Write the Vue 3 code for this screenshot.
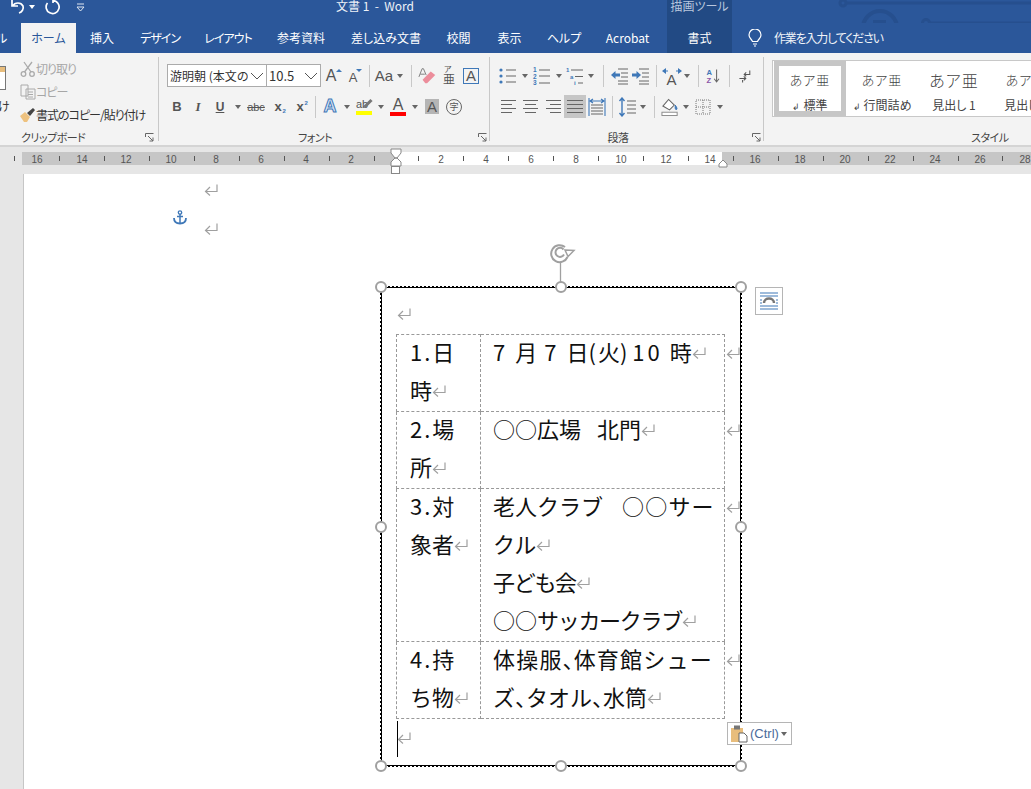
<!--
  Word の編集画面（テキストボックス内の表を選択中）
-->
<template>
  <div class="word">
    <!-- 共通アイコン -->
    <svg class="defs" width="0" height="0">
      <symbol id="ret" viewBox="0 0 14 12"><path d="M13 .5V7.500H1.500M6 3L1.500 7.500l4.500 4" fill="none" stroke="#a0a0a0" stroke-width="1.200" /></symbol>
      <symbol id="bullets" viewBox="0 0 20 20"><g fill="#3f78b8"><circle cx="3" cy="4" r="1.6" /><circle cx="3" cy="10" r="1.6" /><circle cx="3" cy="16" r="1.6" /></g><path d="M8 4h10M8 10h10M8 16h10" stroke="#666" stroke-width="1.2" /></symbol>
      <symbol id="numbers" viewBox="0 0 20 20"><path d="M7 4h11M7 10h11M7 17h11" stroke="#666" stroke-width="1.2" /></symbol>
      <symbol id="multi" viewBox="0 0 20 20"><path d="M6 4h12M10 10.500h8M13 17h5" stroke="#666" stroke-width="1.2" /></symbol>
      <symbol id="outdent" viewBox="0 0 20 20"><path d="M8 3h10M11 7h7M11 11h7M8 15h10M8 18h10" stroke="#666" stroke-width="1" /><path d="M1 9l4.500-4v2.500H10v3H5.500V13z" fill="#3f78b8" /></symbol>
      <symbol id="indent" viewBox="0 0 20 20"><path d="M8 3h10M11 7h7M11 11h7M8 15h10M8 18h10" stroke="#666" stroke-width="1" /><path d="M10 9L5.500 5v2.500H1v3h4.500V13z" fill="#3f78b8" /></symbol>
      <symbol id="direction" viewBox="0 0 20 20"><path d="M0 5l4-3v6zM20 5l-4-3v6z" fill="#3f78b8" /><path d="M4 5h2M14 5h2" stroke="#3f78b8" /></symbol>
      <symbol id="sort" viewBox="0 0 20 20"><path d="M14.500 2v15M11.500 13.500l3 4 3-4" fill="none" stroke="#666" stroke-width="1.300" /></symbol>
      <symbol id="compat" viewBox="0 0 20 20"><path d="M16 3v5H9M11.500 5.500L9 8l2.500 2.500" fill="none" stroke="#555" stroke-width="1.300" /><path d="M3 13h8M8.500 10.500L11 13l-2.500 2.500M7 15v3" fill="none" stroke="#555" stroke-width="1.300" /></symbol>
      <symbol id="left" viewBox="0 0 20 20"><path d="M2 3.500h15M2 7.500h11M2 11.500h15M2 15.500h11" stroke="#666" stroke-width="1.200" /></symbol>
      <symbol id="center" viewBox="0 0 20 20"><path d="M2 3.500h15M4 7.500h11M2 11.500h15M4 15.500h11" stroke="#666" stroke-width="1.200" /></symbol>
      <symbol id="right" viewBox="0 0 20 20"><path d="M3 3.500h15M7 7.500h11M3 11.500h15M7 15.500h11" stroke="#666" stroke-width="1.200" /></symbol>
      <symbol id="justify" viewBox="0 0 20 20"><path d="M2 3.500h16M2 7.500h16M2 11.500h16M2 15.500h16" stroke="#666" stroke-width="1.200" /></symbol>
      <symbol id="distribute" viewBox="0 0 20 20"><path d="M4 8h12M4 11h12M4 14h12M4 17h12" stroke="#666" stroke-width="1.100" /><path d="M2 1v18M18 1v18" stroke="#3f78b8" stroke-width="1.100" /><path d="M3 4h14M6 2L3 4l3 2M14 2l3 2-3 2" fill="none" stroke="#3f78b8" stroke-width="1.200" /></symbol>
      <symbol id="spacing" viewBox="0 0 20 20"><path d="M9 4h9M9 8h9M9 12h9M9 16h9" stroke="#666" stroke-width="1.200" /><path d="M4 1v18M1.500 4L4 1l2.500 3M1.500 16L4 19l2.500-3" fill="none" stroke="#3f78b8" stroke-width="1.400" /></symbol>
      <symbol id="shading" viewBox="0 0 20 20"><path d="M2 9l6-7 6 6-5 5z" fill="#fff" stroke="#666" stroke-width="1.100" /><path d="M15 8c2 3 2.500 4 1 5-1.500-1-1-2-1-5z" fill="#3f78b8" stroke="#3f78b8" /><rect x="1" y="15.500" width="16" height="3.500" fill="#fff" stroke="#888" /></symbol>
      <symbol id="borders" viewBox="0 0 20 20"><path d="M3 3h14v14H3zM10 3v14M3 10h14" fill="none" stroke="#777" stroke-width="1" stroke-dasharray="1 1" /></symbol>
      <symbol id="eraser" viewBox="0 0 22 20"><path d="M5 14l9-9 5 4-9 9H8z" fill="#ec8d9b" /><path d="M1 11L4.500 2H6l3 7M2.500 8h5" fill="none" stroke="#777" /></symbol>
      <symbol id="scissors" viewBox="0 0 16 16"><circle cx="3.500" cy="13" r="2.300" fill="none" stroke="#aaa" stroke-width="1.300" /><circle cx="12" cy="13" r="2.300" fill="none" stroke="#aaa" stroke-width="1.300" /><path d="M4.500 11L12 1M11 11L4 1" stroke="#aaa" stroke-width="1.300" /></symbol>
      <symbol id="copy" viewBox="0 0 16 16"><path d="M1 1h7v11H1zM6 5h9v10H6z" fill="#f3f3f3" stroke="#aaa" /><path d="M8 8h5M8 10.500h5M8 13h5" stroke="#aaa" /></symbol>
      <symbol id="brush" viewBox="0 0 16 16"><path d="M0 9l5-4 5 5-3 5H4z" fill="#eec27f" /><path d="M7 6l6-5 2 2-5 6z" fill="#444" /></symbol>
      <symbol id="launcher" viewBox="0 0 9 9"><path d="M.5 4V.5H8.500M3 3l5 5M8 4.500V8H4.500" fill="none" stroke="#666" /></symbol>
    </svg>

    <!-- タイトルバー -->
    <div class="titlebar">
      <svg class="circuit" width="200" height="53" viewBox="0 0 200 53">
        <g fill="none" stroke="#264f8e" stroke-width="3">
          <circle cx="12" cy="3" r="3" /><path d="M16 3H200" />
          <circle cx="95" cy="23" r="3.500" /><path d="M99 23H200" />
          <circle cx="49" cy="28" r="17" stroke-width="4" />
          <path d="M44 33V22H55M43 22L57 36" stroke-width="4" />
          <path d="M20 50H140L168 33H200" />
        </g>
      </svg>
      <div class="qat">
        <svg class="qat-undo" width="18" height="16" viewBox="0 0 18 16"><path d="M3 1v6h6M3.500 7C6 3 12 3 14 7c1 3-1 6-4 7" fill="none" stroke="#fff" stroke-width="1.700" /></svg>
        <i class="caret white"></i>
        <svg class="qat-redo" width="16" height="16" viewBox="0 0 16 16"><path d="M9 1.500A6.500 6.500 0 1 1 3.500 4M9 0v4" fill="none" stroke="#fff" stroke-width="1.700" /></svg>
        <svg class="qat-more" width="9" height="9" viewBox="0 0 9 9"><path d="M1 1h7" stroke="#dfe6f0" /><path d="M1 4h7L4.500 8z" fill="none" stroke="#dfe6f0" /></svg>
      </div>
      <div class="doc-title">文書 1 &nbsp;-&nbsp; Word</div>
      <div class="ctx-title">描画ツール</div>
    </div>

    <!-- タブ -->
    <div class="tabs">
      <div class="tab file-tab"><span>ル</span></div>
      <div class="tab home">ホーム</div>
      <div v-for="t in tabs" :key="t.label" class="tab" :class="{ tight: t.tight }" :style="{ width: t.w + 'px' }">{{ t.label }}</div>
      <div class="tab ctx">書式</div>
      <svg class="bulb" width="14" height="18" viewBox="0 0 14 18"><path d="M4.500 12.500C3.500 10 1 9 1 6a6 6 0 0 1 12 0c0 3-2.500 4-3.500 6.500zM5 15h4M6 17h2" fill="none" stroke="#fff" stroke-width="1.200" /></svg>
      <div class="tell">作業を入力してください</div>
    </div>

    <!-- リボン -->
    <div class="ribbon">
      <section class="group g-clip">
        <div class="group-body clip-body">
          <div class="paste">
            <div class="paste-icon"></div>
            <div class="paste-label">け</div>
          </div>
          <div class="clip-list">
            <div class="clip-item off"><svg width="16" height="16"><use href="#scissors" /></svg>切り取り</div>
            <div class="clip-item off"><svg width="16" height="16"><use href="#copy" /></svg>コピー</div>
            <div class="clip-item"><svg width="16" height="16"><use href="#brush" /></svg>書式のコピー/貼り付け</div>
          </div>
        </div>
        <div class="group-label">クリップボード<svg class="launcher" width="9" height="9"><use href="#launcher" /></svg></div>
      </section>

      <section class="group g-font">
        <div class="group-body">
          <div class="row">
            <div class="combo c-name"><span>游明朝 (本文のフォント)</span><svg width="14" height="8" viewBox="0 0 14 8"><path d="M1 1l6 6 6-6" fill="none" stroke="#555" /></svg></div>
            <div class="combo c-size"><span>10.5</span><svg width="14" height="8" viewBox="0 0 14 8"><path d="M1 1l6 6 6-6" fill="none" stroke="#555" /></svg></div>
            <template v-for="(t, i) in fontRow1" :key="i">
              <tool-item :t="t" />
            </template>
          </div>
          <div class="row">
            <template v-for="(t, i) in fontRow2" :key="i">
              <tool-item :t="t" />
            </template>
          </div>
        </div>
        <div class="group-label">フォント<svg class="launcher" width="9" height="9"><use href="#launcher" /></svg></div>
      </section>

      <section class="group g-para">
        <div class="group-body">
          <div class="row">
            <template v-for="(t, i) in paraRow1" :key="i">
              <tool-item :t="t" />
            </template>
          </div>
          <div class="row row-b">
            <template v-for="(t, i) in paraRow2" :key="i">
              <tool-item :t="t" />
            </template>
          </div>
        </div>
        <div class="group-label">段落<svg class="launcher" width="9" height="9"><use href="#launcher" /></svg></div>
      </section>

      <section class="group g-style">
        <div class="gallery">
          <div v-for="(s, i) in styles" :key="s.label" class="style-item" :class="{ selected: i === 0, big: s.big }">
            <div class="style-sample">あア亜</div>
            <div class="style-label"><span v-if="s.mark" class="style-mark">↲</span>{{ s.label }}</div>
          </div>
        </div>
        <div class="group-label style-group-label">スタイル</div>
      </section>
    </div>

    <!-- ルーラー -->
    <div class="ruler-area">
      <svg class="ruler" width="1031" height="29" viewBox="0 0 1031 29">
        <rect x="22" y="7" width="1009" height="13" fill="#c6c6c6" />
        <rect x="396" y="7" width="326" height="13" fill="#fff" />
        <path v-for="x in rulerTicks" :key="x" :d="`M${x} 11v5`" stroke="#555" />
        <text v-for="n in rulerNums" :key="n.x" :x="n.x" y="17.500" text-anchor="middle" font-size="10" font-family="Liberation Sans" fill="#555">{{ n.label }}</text>
        <path d="M391 4h10v4l-4 5h-2l-4-5zM391 21v-4l4-4h2l4 4v4z" fill="#fff" stroke="#888" />
        <rect x="391.500" y="21.500" width="8" height="7" fill="#fff" stroke="#888" />
        <path d="M723 15l4 4v3h-8v-3z" fill="#fff" stroke="#888" />
      </svg>
    </div>

    <!-- 文書 -->
    <div class="canvas">
      <div class="page">
        <div class="para p1"><svg class="ret"><use href="#ret" /></svg></div>
        <div class="para p2"><svg class="ret"><use href="#ret" /></svg></div>
        <svg class="anchor" width="14" height="15" viewBox="0 0 14 15"><circle cx="7" cy="2.500" r="1.700" fill="none" stroke="#3f78b8" stroke-width="1.300" /><path d="M7 4v9M4 6.500h6" stroke="#3f78b8" stroke-width="1.500" /><path d="M1 8c0 4 3 5.500 6 5.500S13 12 13 8" fill="none" stroke="#3f78b8" stroke-width="1.800" /></svg>

        <div class="shape">
          <!-- 回転ハンドル -->
          <svg class="rotate" width="32" height="46" viewBox="0 0 32 46">
            <path d="M18 4A8.500 8.500 0 1 0 20.500 14" fill="none" stroke="#a0a0a0" stroke-width="2" />
            <path d="M16.500 6.500A4.500 4.500 0 1 0 17 11.500" fill="none" stroke="#a0a0a0" stroke-width="2" />
            <path d="M18 7l9 .5-6 6z" fill="#fff" stroke="#a0a0a0" stroke-width="1.500" />
            <path d="M13.500 19v26" stroke="#a0a0a0" stroke-width="1.300" />
          </svg>
          <i v-for="h in handles" :key="h" class="handle" :class="h"></i>
          <div class="wrap-btn">
            <svg width="20" height="20" viewBox="0 0 20 20"><path d="M1 2h18M1 5h18M1 15h18M1 18h18" stroke="#3f78b8" stroke-width="1.100" /><path d="M1 9h2M17 9h2M1 12h2M17 12h2" stroke="#3f78b8" /><path d="M5 12c0-6 10-6 10 0" fill="none" stroke="#777" stroke-width="2.500" /></svg>
          </div>

          <div class="shape-para first"><svg class="ret"><use href="#ret" /></svg></div>

          <table class="sheet">
            <colgroup><col class="col-a" /><col class="col-b" /><col class="col-end" /></colgroup>
            <tbody>
              <tr>
                <td class="cell-a"><div class="ln"><span class="lead">1.</span>日<br />時<svg class="ret"><use href="#ret" /></svg></div></td>
                <td class="cell-b"><div class="ln"><span class="num">7</span><i class="sp"></i>月<i class="sp"></i><span class="num">7</span><i class="sp"></i>日<span class="par">(</span>火<span class="par">)</span><i class="sp-s"></i><span class="num">10</span><i class="sp"></i>時<svg class="ret"><use href="#ret" /></svg></div></td>
                <td class="row-end"><div class="ln"><svg class="ret"><use href="#ret" /></svg></div></td>
              </tr>
              <tr>
                <td class="cell-a"><div class="ln"><span class="lead">2.</span>場<br />所<svg class="ret"><use href="#ret" /></svg></div></td>
                <td class="cell-b"><div class="ln">○○広場<i class="gap-s"></i>北門<svg class="ret"><use href="#ret" /></svg></div></td>
                <td class="row-end"><div class="ln"><svg class="ret"><use href="#ret" /></svg></div></td>
              </tr>
              <tr>
                <td class="cell-a"><div class="ln"><span class="lead">3.</span>対<br />象者<svg class="ret"><use href="#ret" /></svg></div></td>
                <td class="cell-b"><div class="ln">老人クラブ<i class="gap"></i><span class="just">○○サー</span><br />クル<svg class="ret"><use href="#ret" /></svg><br /><span class="snug">子ども会</span><svg class="ret"><use href="#ret" /></svg><br />○○<span class="snug">サッカークラブ</span><svg class="ret"><use href="#ret" /></svg></div></td>
                <td class="row-end"><div class="ln"><svg class="ret"><use href="#ret" /></svg></div></td>
              </tr>
              <tr>
                <td class="cell-a"><div class="ln"><span class="lead">4.</span>持<br />ち物<svg class="ret"><use href="#ret" /></svg></div></td>
                <td class="cell-b"><div class="ln"><span class="just">体操服<span class="ten">、</span>体育館シュー</span><br />ズ<span class="ten">、</span>タオル<span class="ten">、</span>水筒<svg class="ret"><use href="#ret" /></svg></div></td>
                <td class="row-end"><div class="ln"><svg class="ret"><use href="#ret" /></svg></div></td>
              </tr>
            </tbody>
          </table>

          <div class="shape-para last"><i class="cursor"></i><svg class="ret"><use href="#ret" /></svg></div>

          <div class="paste-tag">
            <svg width="17" height="18" viewBox="0 0 17 18"><rect x="0" y="3" width="12" height="14" fill="#e8bd7c" /><rect x="3" y="0.500" width="6" height="4" fill="#777" /><path d="M8 8h5l3 3v6H8z" fill="#fff" stroke="#666" /></svg>
            <span>(Ctrl)</span>
            <i class="caret"></i>
          </div>
        </div>
      </div>
    </div>
  </div>
</template>

<script setup>
import { h } from 'vue'

// リボンのボタン1個分（アイコン / 文字 / ▼ / 区切り線）
const ToolItem = (props) => {
  const t = props.t
  const style = { width: t.w + 'px' }
  if (t.caret) return h('span', { class: 'tool', style }, [h('i', { class: 'caret' })])
  if (t.sep) return h('span', { class: 'tool', style }, [h('i', { class: 'sep' })])
  const labels = (t.labels || []).map((l) =>
    h('text', { x: l.x, y: l.y, 'font-size': l.s, fill: l.c, 'font-weight': l.b ? 700 : 400, 'font-family': 'Liberation Sans' }, l.t)
  )
  const inner = t.sym
    ? h('svg', { width: 20, height: 20, viewBox: '0 0 20 20' }, [h('use', { href: '#' + t.sym, width: 20, height: 20 }), ...labels])
    : h('span', { class: t.cls }, t.text)
  return h('span', { class: ['tool', t.on ? 'on' : ''], style }, [inner])
}
ToolItem.props = ['t']

const tabs = [
  { label: '挿入', w: 52 },
  { label: 'デザイン', w: 64, tight: true },
  { label: 'レイアウト', w: 72, tight: true },
  { label: '参考資料', w: 74 },
  { label: '差し込み文書', w: 96 },
  { label: '校閲', w: 49 },
  { label: '表示', w: 53 },
  { label: 'ヘルプ', w: 56 },
  { label: 'Acrobat', w: 71 },
]

const caret = (w) => ({ caret: true, w })
const sep = (w) => ({ sep: true, w })
const blue = '#3f78b8'

const fontRow1 = [
  { w: 22, text: 'A', cls: 'g-grow' },
  { w: 22, text: 'A', cls: 'g-shrink' },
  sep(8),
  { w: 22, text: 'Aa', cls: 'g-aa' },
  caret(10),
  sep(12),
  { w: 22, sym: 'eraser' },
  { w: 20, text: '亜', cls: 'g-furi' },
  { w: 24, text: 'A', cls: 'g-box' },
]
const fontRow2 = [
  { w: 20, text: 'B', cls: 'g-b' },
  { w: 22, text: 'I', cls: 'g-i' },
  { w: 22, text: 'U', cls: 'g-u' },
  caret(14),
  { w: 22, text: 'abc', cls: 'g-abc' },
  { w: 22, text: 'x', cls: 'g-sub' },
  { w: 22, text: 'x', cls: 'g-sup' },
  sep(8),
  { w: 22, text: 'A', cls: 'g-effect' },
  caret(12),
  { w: 22, text: 'ab', cls: 'g-mark' },
  caret(12),
  { w: 22, text: 'A', cls: 'g-color' },
  caret(12),
  { w: 22, text: 'A', cls: 'g-shade' },
  { w: 22, text: '字', cls: 'g-circle' },
]
const paraRow1 = [
  { w: 22, sym: 'bullets' }, caret(12),
  { w: 21, sym: 'numbers', labels: [
    { x: 1, y: 6, s: 6.5, c: blue, t: '1', b: true },
    { x: 1, y: 12.5, s: 6.5, c: blue, t: '2', b: true },
    { x: 1, y: 19, s: 6.5, c: blue, t: '3', b: true },
  ] },
  caret(13),
  { w: 20, sym: 'multi', labels: [
    { x: 1, y: 6, s: 6, c: blue, t: '1', b: true },
    { x: 5, y: 12.5, s: 6, c: blue, t: 'a', b: true },
    { x: 9, y: 19, s: 6, c: blue, t: 'i', b: true },
  ] },
  caret(12),
  sep(12),
  { w: 21, sym: 'outdent' },
  { w: 22, sym: 'indent' },
  sep(8),
  { w: 23, sym: 'direction', labels: [{ x: 4.5, y: 18.5, s: 15, c: '#555', t: 'A' }] },
  caret(8),
  sep(14),
  { w: 16, sym: 'sort', labels: [
    { x: 2, y: 9, s: 9.5, c: blue, t: 'A', b: true },
    { x: 2, y: 18.5, s: 9.5, c: '#8a55a8', t: 'Z', b: true },
  ] },
  sep(16),
  { w: 16, sym: 'compat' },
]
const paraRow2 = [
  { w: 22, sym: 'left' },
  { w: 22, sym: 'center' },
  { w: 22, sym: 'right' },
  { w: 22, sym: 'justify', on: true },
  { w: 22, sym: 'distribute' },
  sep(8),
  { w: 23, sym: 'spacing' }, caret(8),
  sep(14),
  { w: 19, sym: 'shading' }, caret(12),
  { w: 22, sym: 'borders' }, caret(12),
]

const styles = [
  { label: '標準', mark: true },
  { label: '行間詰め', mark: true },
  { label: '見出し 1', big: true },
  { label: '見出し 2' },
]

// ルーラー：0 は x=396、1 目盛 22.46px
const unit = 22.46
const rulerNums = []
const rulerTicks = []
for (let n = -16; n <= 28; n++) {
  const x = Math.round(396 + n * unit)
  if (n === 0) continue
  if (n % 2 === 0) rulerNums.push({ x, label: Math.abs(n) })
  else rulerTicks.push(x + 0.5)
}
rulerTicks.push(Math.round(396 - 17 * unit) + 0.5)

const handles = ['tl', 'tc', 'tr', 'ml', 'mr', 'bl', 'bc', 'br']
</script>

<style>
html, body { margin: 0; padding: 0; background: #fff; }
</style>

<style scoped>
.word { position: relative; width: 1031px; height: 789px; overflow: hidden; display: flex; flex-direction: column; background: #e6e6e6; color: #333; font-family: "Noto Sans CJK JP", "Liberation Sans", sans-serif; font-size: 12px; font-feature-settings: "palt"; }
.defs { position: absolute; }

/* タイトルバー */
.titlebar { position: relative; height: 23px; flex: none; display: flex; background: #2b579a; color: #fff; }
.circuit { position: absolute; top: 0; left: 831px; }
.qat { width: 336px; display: flex; align-items: center; height: 14px; flex: none; }
.qat-undo { margin-left: 9px; }
.qat-undo + .caret { margin-left: 2px; }
.qat-redo { margin-left: 9px; }
.qat-more { margin-left: 16px; }
.doc-title { width: 331px; flex: none; line-height: 11px; font-size: 12px; color: #eef2f8; position: relative; }
.ctx-title { position: relative; width: 65px; text-align: center; background: #224a84; color: #b9c7dd; line-height: 12px; }

/* タブ */
.tabs { position: relative; height: 30px; flex: none; display: flex; align-items: stretch; background: #2b579a; color: #fff; }
.tab { display: flex; align-items: center; justify-content: center; flex: none; line-height: 30px; }
.tab.tight { letter-spacing: -1px; }
.file-tab { width: 21px; justify-content: flex-start; overflow: hidden; }
.file-tab span { margin-left: -4px; }
.home { width: 55px; background: #f3f3f3; color: #2b579a; }
.ctx { width: 65px; margin-left: 4px; background: #224a84; }
.bulb { margin: 6px 0 0 16px; flex: none; position: relative; }
.tell { margin-left: 12px; line-height: 30px; position: relative; color: #f0f3f8; letter-spacing: -1.200px; }

/* リボン */
.ribbon { height: 92px; flex: none; display: flex; background: #f3f3f3; border-bottom: 2px solid #d4d4d4; }
.group { position: relative; flex: none; display: flex; flex-direction: column; }
.group::after { content: ""; position: absolute; right: 0; top: 4px; bottom: 4px; width: 1px; background: #c8c8c8; }
.group-body { height: 76px; box-sizing: border-box; padding-top: 11px; display: flex; flex-direction: column; gap: 8px; }
.group-label { position: relative; height: 16px; line-height: 16px; font-size: 11px; letter-spacing: -.5px; text-align: center; color: #444; }
.launcher { position: absolute; right: 5px; top: 4px; }
.g-clip { width: 159px; }
.g-clip .group-label { text-align: left; padding-left: 21px; }
.g-font { width: 331px; padding-left: 8px; box-sizing: border-box; }
.g-font .group-label { padding-right: 27px; }
.g-font .launcher { right: 3px; }
.g-para { width: 274px; padding-left: 7px; box-sizing: border-box; }
.g-para .group-label { padding-right: 25px; }
.g-para .launcher { right: 3px; }
.g-style { flex: 1; overflow: hidden; }
.g-style::after { display: none; }
.row { display: flex; align-items: center; height: 23px; }
.row-b { margin-left: 1px; }

.clip-body { flex-direction: row; padding-top: 0; gap: 0; }
.paste { width: 20px; overflow: hidden; flex: none; }
.paste-icon { width: 6px; height: 24px; margin-top: 13px; background: linear-gradient(#e8bd7c 0 5px, #fff 5px); border: 1px solid #777; border-left: 0; box-sizing: border-box; }
.paste-label { margin: 9px 0 0 -2px; line-height: 14px; font-size: 12px; }
.clip-list { padding-top: 4px; }
.clip-item { display: flex; align-items: center; height: 23px; line-height: 23px; white-space: nowrap; letter-spacing: -1px; }
.clip-item.off { color: #a6a6a6; }

.combo { flex: none; height: 23px; box-sizing: border-box; display: flex; align-items: center; background: #fff; border: 1px solid #ababab; overflow: hidden; white-space: nowrap; font-feature-settings: "palt" 0; }
.combo span { flex: 1; overflow: hidden; padding-left: 2px; }
.combo svg { flex: none; margin: 0 2px; }
.c-name { width: 100px; }
.c-size { width: 55px; margin-left: -1px; font-size: 13px; }
:deep(.tool) { flex: none; height: 23px; display: flex; align-items: center; justify-content: center; color: #555; font-family: "Liberation Sans", sans-serif; }
:deep(.tool.on) { background: #c6c6c6; }
:deep(.sep) { width: 1px; height: 22px; background: #c8c8c8; }
.caret, :deep(.caret) { display: inline-block; width: 0; height: 0; border: 3px solid transparent; border-top: 4px solid #666; border-bottom: 0; }
.caret.white { border-top-color: #fff; }

:deep(.g-grow) { font-size: 16px; position: relative; left: -1px; }
:deep(.g-grow)::after { content: ""; position: absolute; right: -6px; top: 2px; border: 3px solid transparent; border-bottom: 3px solid #3f78b8; border-top: 0; }
:deep(.g-shrink) { font-size: 13px; position: relative; top: 2px; left: -1px; }
:deep(.g-shrink)::after { content: ""; position: absolute; right: -5px; top: -1px; border: 3px solid transparent; border-top: 3px solid #3f78b8; border-bottom: 0; }
:deep(.g-aa) { font-size: 15px; }
:deep(.g-furi) { font-size: 12px; font-family: "Noto Sans CJK JP", sans-serif; position: relative; top: 3px; }
:deep(.g-furi)::before { content: "ア"; position: absolute; top: -7px; left: 1px; font-size: 8px; }
:deep(.g-box) { width: 14px; height: 14px; line-height: 14px; text-align: center; border: 1px solid #3f78b8; font-size: 15px; }
:deep(.g-b) { font-weight: 700; font-size: 13px; }
:deep(.g-i) { font-style: italic; font-size: 13px; font-family: "Liberation Serif", serif; font-weight: 700; }
:deep(.g-u) { text-decoration: underline; font-weight: 700; font-size: 12px; }
:deep(.g-abc) { text-decoration: line-through; font-size: 11px; }
:deep(.g-sub), :deep(.g-sup) { font-weight: 700; font-size: 13px; position: relative; }
:deep(.g-sub)::after { content: "2"; position: absolute; left: 8px; bottom: 0; font-size: 6px; color: #3f78b8; }
:deep(.g-sup)::after { content: "2"; position: absolute; left: 8px; top: 1px; font-size: 6px; color: #3f78b8; }
:deep(.g-effect) { font-size: 18px; font-weight: 700; color: #dbe7f5; -webkit-text-stroke: 1px #3f78b8; }
:deep(.g-mark) { position: relative; font-size: 11px; width: 16px; text-align: left; line-height: 13px; border-bottom: 4px solid #ff0; }
:deep(.g-mark)::after { content: ""; position: absolute; right: -1px; top: 4px; width: 10px; height: 3px; background: #777; transform: rotate(-45deg); }
:deep(.g-color) { font-size: 16px; width: 16px; text-align: center; line-height: 15px; border-bottom: 4px solid #f00; }
:deep(.g-shade) { width: 14px; height: 15px; line-height: 15px; text-align: center; background: #b5b5b5; font-size: 15px; }
:deep(.g-circle) { width: 14px; height: 14px; line-height: 13px; text-align: center; border: 1px solid #666; border-radius: 50%; font-size: 9px; font-family: "Noto Sans CJK JP", sans-serif; }

/* スタイルギャラリー */
.g-style { padding: 7px 0 0 8px; }
.gallery { height: 58px; box-sizing: border-box; display: flex; background: #fff; border: 1px solid #c8c8c8; border-right: 0; padding-left: 1px; overflow: hidden; }
.style-item { flex: none; width: 72px; box-sizing: border-box; padding-top: 7px; text-align: center; white-space: nowrap; color: #444; }
.style-item.selected { border: 5px solid #c6c6c6; padding-top: 2px; }
.style-sample { height: 24px; line-height: 24px; font-size: 13px; font-weight: 300; letter-spacing: 1px; }
.big .style-sample { font-size: 16px; }
.style-label { line-height: 18px; margin-top: 4px; font-size: 12px; }
.style-mark { font-size: 9px; margin-right: 3px; }
.style-group-label { margin-top: 12px; padding-left: 199px; text-align: left; }

/* ルーラー */
.ruler-area { height: 27px; flex: none; overflow: hidden; background: #e6e6e6; }
.ruler { display: block; margin-top: -2px; }

/* 文書 */
.canvas { flex: 1; padding-left: 23px; min-height: 0; }
.page { position: relative; height: 100%; background: #fff; border-left: 1px solid #c6c6c6; }
.ret { display: inline-block; width: 14px; height: 12px; vertical-align: -1px; }
.para { margin-left: 180px; }
.p1 { height: 33px; padding-top: 7px; box-sizing: border-box; }
.p2 { height: 44px; padding-top: 13px; box-sizing: border-box; }
.anchor { position: absolute; left: 149px; top: 36px; }

.shape { position: relative; margin: 35px 0 0 356px; width: 362px; height: 481px; box-sizing: border-box; padding-left: 14px; border: 2px dotted #000; }
/* 枠の内側の細い実線 */
.shape::before { content: ""; position: absolute; inset: -1px; border: 1px solid #000; }
.rotate { position: absolute; left: 165px; top: -45px; }
.handle { position: absolute; width: 12px; height: 12px; box-sizing: border-box; background: #fff; border: 2px solid #a0a0a0; border-radius: 50%; margin: -6px 0 0 -6px; }
.tl { left: -1px; top: -1px; }
.tc { left: 50%; top: -1px; }
.tr { left: 100%; top: -1px; margin-left: -5px; }
.ml { left: -1px; top: 50%; }
.mr { left: 100%; top: 50%; margin-left: -5px; }
.bl { left: -1px; top: 100%; margin-top: -5px; }
.bc { left: 50%; top: 100%; margin-top: -5px; }
.br { left: 100%; top: 100%; margin-left: -5px; margin-top: -5px; }
.wrap-btn { position: absolute; left: 373px; top: -1px; width: 28px; height: 28px; box-sizing: border-box; padding: 3px; background: #fff; border: 1px solid #b5b5b5; }
.wrap-btn svg { display: block; }

.shape-para.first { height: 46px; padding: 20px 0 0 1px; box-sizing: border-box; line-height: 12px; }
.sheet { border-collapse: collapse; table-layout: fixed; width: 344px; color: #111; font-size: 22px; line-height: 38px; font-feature-settings: "palt" 0; }
.col-a { width: 84px; }
.col-b { width: 244px; }
.col-end { width: 16px; }
.sheet td { padding: 0; vertical-align: top; white-space: nowrap; }
.ln { margin: -3px 0 3px; }
.sheet .ret { vertical-align: 2px; }
.cell-a, .cell-b { border: 1px dashed #999; }
.cell-a { padding-left: 13px !important; }
.cell-b { padding-left: 12px !important; }
.sheet td.row-end { border: 0; padding-left: 1px; }
.lead { letter-spacing: 2px; }
.num { letter-spacing: 3px; }
.par { letter-spacing: 2px; }
.sp { display: inline-block; width: 7px; }
.sp-s { display: inline-block; width: 3px; }
.gap { display: inline-block; width: 19px; }
.gap-s { display: inline-block; width: 16px; }
.snug { letter-spacing: -1.300px; }
.just { letter-spacing: 1.200px; }
.ten { letter-spacing: -11px; }
.shape-para.last { position: relative; padding: 13px 0 0 1px; line-height: 12px; }
.cursor { position: absolute; left: 1px; top: 2px; width: 1px; height: 36px; background: #000; }
.paste-tag { position: absolute; left: 345px; top: 434px; width: 65px; height: 23px; box-sizing: border-box; display: flex; align-items: center; gap: 2px; padding-left: 3px; background: #fff; border: 1px solid #b5b5b5; color: #4a6a9a; font-size: 13px; font-family: "Liberation Sans", sans-serif; }
</style>
